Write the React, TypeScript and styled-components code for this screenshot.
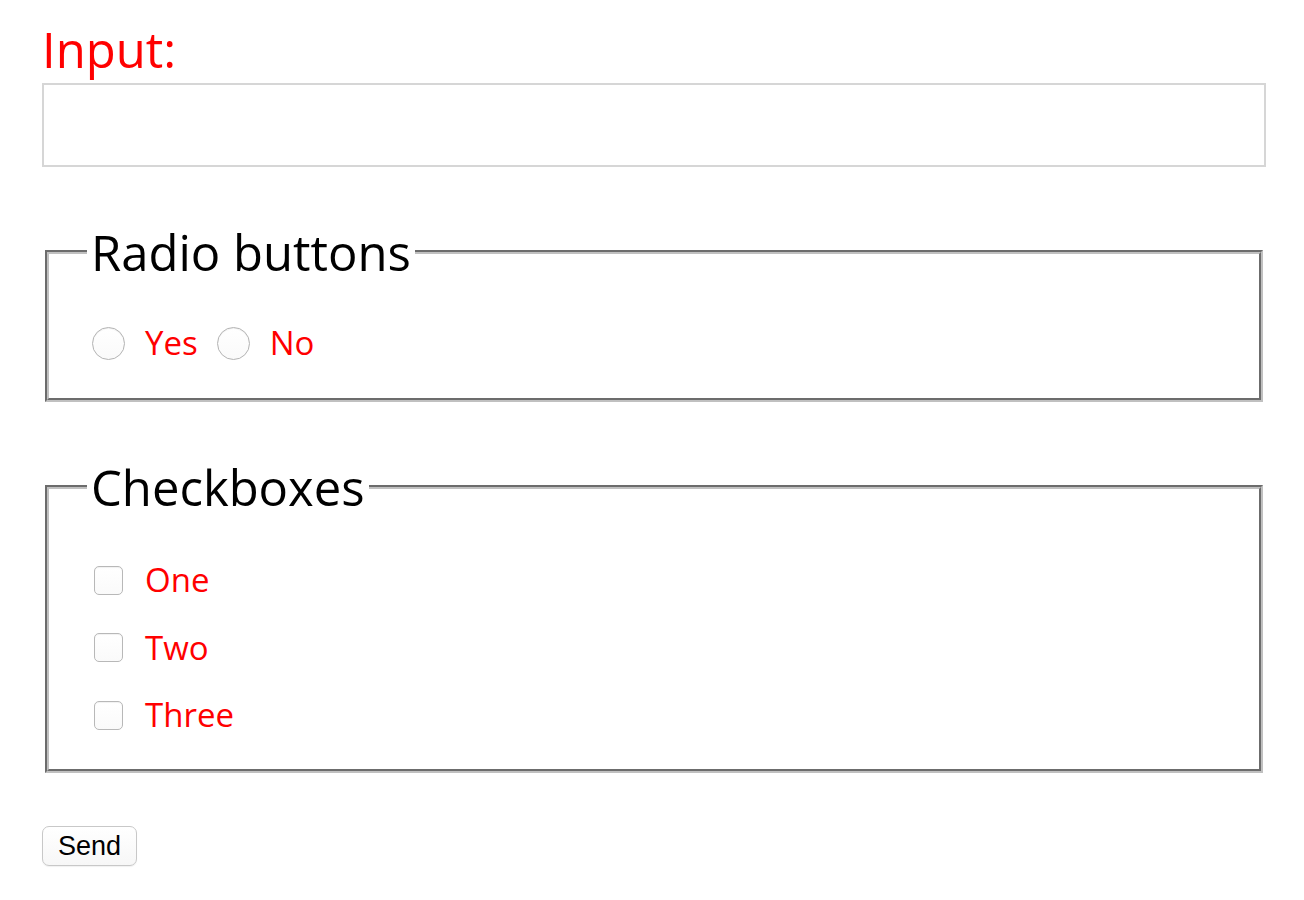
import React from 'react';
import styled, { createGlobalStyle } from 'styled-components';

const GlobalStyle = createGlobalStyle`
  html, body { margin: 0; padding: 0; background: #ffffff; }
  body { font-family: "Open Sans", "Liberation Sans", sans-serif; }
`;

const Form = styled.form`
  display: flex;
  flex-direction: column;
  align-items: stretch;
  width: 1304px;
  box-sizing: border-box;
  padding: 15px 38px 34px 42px;
`;

const FieldLabel = styled.label`
  display: block;
  font-size: 49px;
  line-height: 68px;
  color: #ff0000;
`;

const TextInput = styled.input`
  display: block;
  box-sizing: border-box;
  width: 100%;
  height: 84px;
  margin: 0;
  border: 2px solid #d6d6d6;
  border-radius: 0;
  background: #ffffff;
  font: inherit;
  font-size: 33px;
  padding: 0 12px;
  outline: none;
`;

const Fieldset = styled.fieldset`
  margin: 51px 3px 0 3px;
  padding: 0;
  border: 4px groove rgb(192, 192, 192);
  min-width: 0;
`;

const Legend = styled.legend`
  font-size: 49px;
  line-height: 68px;
  color: #000000;
  padding: 0 4px;
  margin-left: 38px;
`;

const RadioRow = styled.div`
  display: flex;
  align-items: center;
  gap: 19px;
  padding: 34px 0 32px 43px;
`;

const CheckList = styled.div`
  display: flex;
  flex-direction: column;
  gap: 21.5px;
  padding: 36px 0 31px 43px;
`;

const Option = styled.label`
  display: flex;
  align-items: center;
  gap: 20px;
  height: 46px;
  font-size: 33px;
  line-height: 46px;
  color: #ff0000;
  cursor: pointer;
`;

const Radio = styled.input.attrs({ type: 'radio' })`
  appearance: none;
  -webkit-appearance: none;
  box-sizing: border-box;
  width: 33px;
  height: 33px;
  margin: 0;
  border: 1.5px solid #b3b3b3;
  border-radius: 50%;
  background: linear-gradient(#ffffff, #fafafa);
  box-shadow: inset 0 1px 1px rgba(0, 0, 0, 0.06);
  flex: none;
`;

const Checkbox = styled.input.attrs({ type: 'checkbox' })`
  appearance: none;
  -webkit-appearance: none;
  box-sizing: border-box;
  width: 29px;
  height: 29px;
  margin: 0 2px;
  border: 1.5px solid #b8b8b8;
  border-radius: 5px;
  background: linear-gradient(#ffffff, #fafafa);
  box-shadow: inset 0 1px 1px rgba(0, 0, 0, 0.06);
  flex: none;
`;

const SendButton = styled.button`
  align-self: flex-start;
  box-sizing: border-box;
  width: 95px;
  height: 40px;
  margin-top: 53px;
  padding: 0;
  border: 1px solid #c8c8c8;
  border-radius: 7px;
  background: linear-gradient(#ffffff, #f7f7f7);
  box-shadow: 0 1px 1px rgba(0, 0, 0, 0.06);
  font-family: "Liberation Sans", Arial, sans-serif;
  font-size: 27px;
  color: #000000;
  cursor: pointer;
`;

export default function App() {
  return (
    <>
      <GlobalStyle />
      <Form onSubmit={(e) => e.preventDefault()}>
        <FieldLabel htmlFor="input">Input:</FieldLabel>
        <TextInput id="input" type="text" />

        <Fieldset>
          <Legend>Radio buttons</Legend>
          <RadioRow>
            <Option>
              <Radio name="answer" value="yes" />
              Yes
            </Option>
            <Option>
              <Radio name="answer" value="no" />
              No
            </Option>
          </RadioRow>
        </Fieldset>

        <Fieldset>
          <Legend>Checkboxes</Legend>
          <CheckList>
            <Option>
              <Checkbox name="one" />
              One
            </Option>
            <Option>
              <Checkbox name="two" />
              Two
            </Option>
            <Option>
              <Checkbox name="three" />
              Three
            </Option>
          </CheckList>
        </Fieldset>

        <SendButton type="submit">Send</SendButton>
      </Form>
    </>
  );
}
